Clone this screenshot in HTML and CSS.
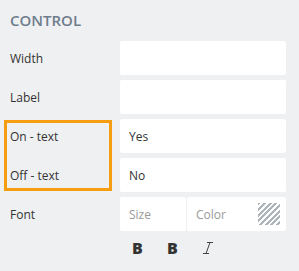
FILE: index.html
```html
<!DOCTYPE html>
<html lang="en">
<head>
    <meta charset="UTF-8">
    <meta name="viewport" content="width=device-width, initial-scale=1.0">
    <title>Control</title>
    <link rel="stylesheet" href="styles.css">
</head>
<body>
    <div class="panel">
        <h2 class="panel-title">CONTROL</h2>
        <div class="form-grid">
            <label class="field-label">Width</label>
            <div class="field"></div>

            <label class="field-label">Label</label>
            <div class="field"></div>

            <label class="field-label">On - text</label>
            <div class="field">Yes</div>

            <label class="field-label">Off - text</label>
            <div class="field">No</div>

            <label class="field-label">Font</label>
            <div class="font-boxes">
                <div class="field size placeholder">Size</div>
                <div class="field color placeholder">
                    <span>Color</span>
                    <span class="swatch"></span>
                </div>
            </div>

            <div></div>
            <div class="toolbar">
                <button class="tool bold">B</button>
                <button class="tool bold">B</button>
                <button class="tool">
                    <svg width="12" height="14" viewBox="0 0 12 14">
                        <path d="M5 1.5h6M1 12.5h6M8 1.5L4 12.5" stroke="#444" stroke-width="1" fill="none"/>
                    </svg>
                </button>
            </div>
        </div>
        <!-- highlight over the on/off labels -->
        <div class="highlight"></div>
    </div>
</body>
</html>
```

FILE: styles.css
```css
body {
    margin: 0;
    background-color: #eff0f2;
    font-family: "Open Sans", Arial, sans-serif;
    color: #333;
}
.panel {
    position: relative;
    width: 299px;
    height: 271px;
    box-sizing: border-box;
    padding: 9px 13px 0 0;
}
.panel-title {
    margin: 0 0 10px 10px;
    font-size: 15px;
    font-weight: 600;
    color: #6e7c8c;
    line-height: 22px;
    letter-spacing: 0;
}
.form-grid {
    display: grid;
    grid-template-columns: 120px 1fr;
    grid-auto-rows: 34px;
    row-gap: 5px;
}
.field-label {
    display: flex;
    align-items: center;
    padding-left: 10px;
    font-size: 12px;
}
.field {
    display: flex;
    align-items: center;
    padding-left: 9px;
    background-color: #fff;
    border-radius: 2px;
    font-size: 12px;
}
.placeholder {
    color: #999;
}
.font-boxes {
    display: flex;
    gap: 1px;
}
.size {
    width: 57px;
}
.color {
    flex: 1;
    justify-content: space-between;
    padding-right: 6px;
}
.swatch {
    width: 22px;
    height: 22px;
    background: repeating-linear-gradient(135deg, #adb4bc 0 2px, #fff 2px 4px);
}
.toolbar {
    display: flex;
    align-items: center;
    height: 24px;
}
.tool {
    width: 35px;
    height: 24px;
    padding: 0;
    border: none;
    background: none;
    display: flex;
    align-items: center;
    justify-content: center;
    color: #333;
    font-family: "Open Sans", Arial, sans-serif;
}
.tool.bold {
    font-size: 16px;
    font-weight: 800;
}
.highlight {
    position: absolute;
    left: 4px;
    top: 120px;
    width: 102px;
    height: 65px;
    border: 3px solid #f79d10;
}
```
